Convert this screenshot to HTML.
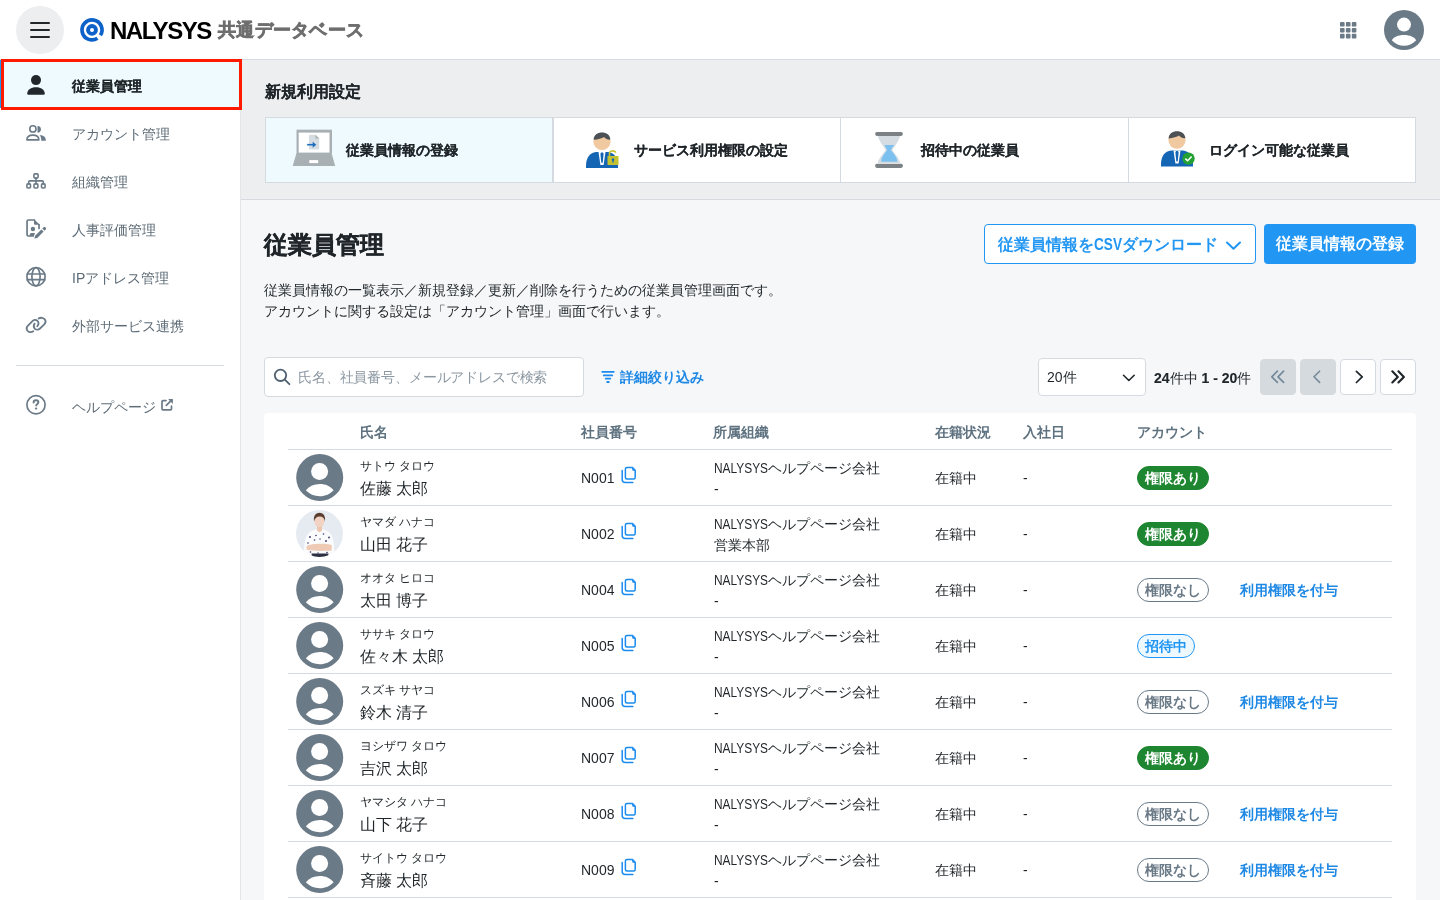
<!DOCTYPE html>
<html lang="ja">
<head>
<meta charset="utf-8">
<style>
*{box-sizing:border-box;margin:0;padding:0}
html,body{width:1440px;height:900px;overflow:hidden}
body{font-family:"Liberation Sans",sans-serif;color:#1f2529;background:#f6f7f9;position:relative;font-size:14px}
.abs{position:absolute}
.card,.nav.sel,#newset h2{-webkit-text-stroke:0.1px currentColor}
b{-webkit-text-stroke:0.15px currentColor}
#title{-webkit-text-stroke:0.4px currentColor}
/* header */
#hdr{position:absolute;left:0;top:0;width:1440px;height:60px;background:#fff;border-bottom:1px solid #d5dae0}
#burger{position:absolute;left:16px;top:6px;width:48px;height:48px;border-radius:50%;background:#eceef0}
#burger i{position:absolute;left:14px;width:20px;height:2px;background:#22272b;border-radius:1px}
#logo-t{position:absolute;left:110px;top:15.5px;font-size:24px;font-weight:bold;color:#000;letter-spacing:-1.5px;line-height:30px}
#logo-j{position:absolute;left:218px;top:16px;font-size:18.4px;font-weight:bold;color:#6e6e6e;line-height:28px;-webkit-text-stroke:0.7px #6e6e6e;letter-spacing:0.3px}
/* sidebar */
#side{position:absolute;left:0;top:60px;width:241px;height:840px;background:#fff;border-right:1px solid #e3e6e9}
.nav{position:absolute;left:0;width:240px;height:48px;color:#5e6c77;font-size:14px;line-height:48px}
.nav span{position:absolute;left:72px;top:2px}
.nav.sel{background:#eefafe;color:#1f2529;font-weight:bold}
#redbox{position:absolute;z-index:10;left:1px;top:59px;width:241px;height:51px;border:3px solid #ff1a00}
#divider{position:absolute;left:16px;top:305px;width:208px;height:1px;background:#d5dae0}
/* main */
#newset{position:absolute;left:241px;top:60px;width:1199px;height:140px;background:#edeef0;border-bottom:1px solid #d5dae0}
#newset h2{position:absolute;left:24px;top:20px;font-size:16px;font-weight:bold;line-height:24px}
.card{position:absolute;top:57px;height:66px;background:#fff;border:1px solid #d5dae0;font-weight:bold;font-size:14px}
.card.first{background:#eefafe}
.card span{position:absolute;left:80px;top:22px;line-height:20px}
.card svg{position:absolute;left:24px;top:8px}
#title{position:absolute;left:264px;top:228px;font-size:24px;font-weight:bold;line-height:34px}
#desc{position:absolute;left:264px;top:280px;font-size:14px;line-height:21px;color:#1f2529}
.btn{position:absolute;top:224px;height:40px;border-radius:4px;font-size:16px;font-weight:bold;line-height:38px}
#btn-csv{left:984px;width:272px;border:1px solid #2196f3;background:#fff;color:#2196f3;padding-left:13px;padding-top:1px}
#btn-reg{left:1264px;width:152px;background:#2196f3;color:#fff;text-align:center;line-height:40px}
#search{position:absolute;left:264px;top:357px;width:320px;height:40px;background:#fff;border:1px solid #d5dae0;border-radius:4px}
#search span{position:absolute;left:33px;top:0;line-height:38px;color:#8b97a1;font-size:14px;letter-spacing:-0.15px;white-space:nowrap}
#filter{position:absolute;left:600px;top:367px;color:#1e88e5;font-weight:bold;font-size:14px;line-height:20px}
#filter span{position:absolute;left:20px;top:0;white-space:nowrap}
#psel{position:absolute;left:1038px;top:358px;width:108px;height:38px;background:#fff;border:1px solid #d5dae0;border-radius:4px}
#psel span{position:absolute;left:8px;top:0;line-height:36px;font-size:14px}
#pinfo{position:absolute;left:1154px;top:368px;line-height:20px;font-size:14px;white-space:nowrap}
.pg{position:absolute;top:359px;width:36px;height:36px;border-radius:4px;background:#fff;border:1px solid #d5dae0}
.pg.dis{background:#d5dadf;border-color:#d5dadf}
.pg svg{position:absolute;left:0;top:0}
/* table */
#tcard{position:absolute;left:264px;top:413px;width:1152px;height:500px;background:#fff;border-radius:4px}
.th{position:absolute;top:7px;font-weight:bold;color:#5f7280;font-size:14px;line-height:24px;white-space:nowrap}
.hline{position:absolute;left:24px;width:1104px;height:1px;background:#d5dae0}
.row{position:absolute;left:24px;width:1104px;height:56px}
.av{position:absolute;left:8px;top:4px;width:48px;height:48px}
.kana{position:absolute;left:72px;top:7px;font-size:12px;line-height:18px;white-space:nowrap}
.nm{position:absolute;left:72px;top:27px;font-size:16px;line-height:24px;white-space:nowrap}
.eid{position:absolute;left:293px;top:18px;font-size:14px;line-height:20px}
.copy{position:absolute;left:328px;top:12px}
.org{position:absolute;left:426px;top:8px;font-size:14px;line-height:21px;white-space:nowrap}
.lat{display:inline-block;transform:scaleX(0.85);transform-origin:0 0;margin-right:-9.6px}
.lat2{display:inline-block;transform:scaleX(0.85);transform-origin:0 0;margin-right:-5px}
.st{position:absolute;left:647px;top:18px;font-size:14px;line-height:20px}
.dt{position:absolute;left:735px;top:18px;font-size:14px;line-height:20px}
.badge{position:absolute;left:849px;top:16px;height:24px;border-radius:12px;font-size:14px;font-weight:bold;line-height:22px;padding:0 7px;border:1px solid;white-space:nowrap}
.b-on{background:#1e8530;border-color:#1e8530;color:#fff}
.b-off{background:#fff;border-color:#6b7a87;color:#6b7a87}
.b-inv{background:#eef8ff;border-color:#2196f3;color:#2196f3}
.grant{position:absolute;left:952px;top:18px;font-size:14px;font-weight:bold;color:#1e88e5;line-height:20px;white-space:nowrap}
</style>
</head>
<body>
<div id="root" style="position:absolute;left:0;top:0;width:1440px;height:900px;overflow:hidden;will-change:transform">
<div id="hdr">
  <div id="burger"><i style="top:16px"></i><i style="top:23px"></i><i style="top:30px"></i></div>
  <svg class="abs" style="left:78px;top:16px" width="28" height="28" viewBox="0 0 28 28">
    <path d="M19.45 22.29 A10 10 0 1 1 22.39 19.35" fill="none" stroke="#0d62c9" stroke-width="3.7"/>
    <circle cx="14" cy="13.9" r="3.95" fill="none" stroke="#0d62c9" stroke-width="3.9"/>
  </svg>
  <div id="logo-t">NALYSYS</div>
  <div id="logo-j">共通データベース</div>
  <svg class="abs" style="left:1339.8px;top:21.7px" width="17" height="17" viewBox="0 0 17 17" fill="#6b7a87"><rect x="0" y="0" width="4.6" height="4.6" rx="0.9"/><rect x="5.9" y="0" width="4.6" height="4.6" rx="0.9"/><rect x="11.8" y="0" width="4.6" height="4.6" rx="0.9"/><rect x="0" y="5.9" width="4.6" height="4.6" rx="0.9"/><rect x="5.9" y="5.9" width="4.6" height="4.6" rx="0.9"/><rect x="11.8" y="5.9" width="4.6" height="4.6" rx="0.9"/><rect x="0" y="11.8" width="4.6" height="4.6" rx="0.9"/><rect x="5.9" y="11.8" width="4.6" height="4.6" rx="0.9"/><rect x="11.8" y="11.8" width="4.6" height="4.6" rx="0.9"/></svg>
  <svg class="abs" style="left:1384px;top:10px" width="40" height="40" viewBox="0 0 40 40">
    <circle cx="20" cy="20" r="20" fill="#6b7a87"/>
    <circle cx="20" cy="14.6" r="7" fill="#fff"/>
    <path d="M7.8 30.2 C9.5 27 14 24.9 20 24.9 C26 24.9 30.5 27 32.2 30.2 C28.5 33.9 24.5 35.8 20 35.8 C15.5 35.8 11.5 33.9 7.8 30.2Z" fill="#fff"/>
  </svg>
</div>

<div id="side">
<div class="nav sel" style="top:0px"><span>従業員管理</span></div>
<div class="nav" style="top:48px"><span>アカウント管理</span></div>
<div class="nav" style="top:96px"><span>組織管理</span></div>
<div class="nav" style="top:144px"><span>人事評価管理</span></div>
<div class="nav" style="top:192px"><span>IPアドレス管理</span></div>
<div class="nav" style="top:240px"><span>外部サービス連携</span></div>
<div id="divider"></div>
<div class="nav" style="top:321px"><span>ヘルプページ</span></div>

</div>
<svg style="position:absolute;z-index:5;left:27px;top:75px;" width="18" height="20" viewBox="0 0 18 20"><circle cx="9" cy="5.1" r="5" fill="#22272b"/><path d="M0.2 18.6 C0.4 14.6 4 12.3 9 12.3 C14 12.3 17.6 14.6 17.8 18.6 C17.8 19.4 17.4 19.8 16.6 19.8 L1.4 19.8 C0.6 19.8 0.2 19.4 0.2 18.6Z" fill="#22272b"/></svg><svg style="position:absolute;z-index:5;left:22px;top:120px;" width="28" height="26" viewBox="0 0 28 26"><g fill="none" stroke="#6b7a87" stroke-linecap="round" stroke-linejoin="round" stroke-width="1.6"><circle cx="10.9" cy="8.9" r="3.1"/><path d="M4.9 19.9 C4.9 16.6 7.5 15.1 10.9 15.1 C14.3 15.1 16.9 16.6 16.9 19.9 Z"/></g><path d="M15.5 5.9 A3.4 3.4 0 0 1 15.5 12.7Z" fill="#6b7a87"/><path d="M17.6 14.9 C21.5 15 23.9 17 23.9 20.7 H19.3 C19.3 18 18.7 16.3 17.6 14.9Z" fill="#6b7a87"/></svg><svg style="position:absolute;z-index:5;left:22px;top:168px;" width="28" height="26" viewBox="0 0 28 26"><g fill="none" stroke="#6b7a87" stroke-linecap="round" stroke-linejoin="round" stroke-width="1.6"><rect x="11.9" y="5.9" width="4.2" height="4.2" rx="1"/><rect x="4.9" y="15.9" width="3.6" height="4.1" rx="1"/><rect x="12" y="15.9" width="3.9" height="4.1" rx="1"/><rect x="19.5" y="15.9" width="3.6" height="4.1" rx="1"/><path d="M14 10.1 V15.9 M6.7 15.9 V14 Q6.7 12.9 7.8 12.9 H20.2 Q21.3 12.9 21.3 14 V15.9"/></g></svg><svg style="position:absolute;z-index:5;left:22px;top:216px;" width="28" height="26" viewBox="0 0 28 26"><g fill="none" stroke="#6b7a87" stroke-linecap="round" stroke-linejoin="round" stroke-width="1.7"><path d="M12.5 4 H6.2 Q5.05 4 5.05 5.2 V18.8 Q5.05 20 6.2 20 H7"/><path d="M17 8.5 V12.5"/></g><path d="M12 3.2 L17.9 8.7 H13 Q12 8.7 12 7.7Z" fill="#6b7a87"/><circle cx="10.9" cy="13" r="2.2" fill="#6b7a87"/><path d="M6.8 20.8 L8.2 17.6 Q8.6 16.9 9.5 16.9 H12.9 L11.8 20.8Z" fill="#6b7a87"/><path d="M12.4 22.5 L13.1 19.7 L19.4 13.4 L21.6 15.6 L15.3 21.9 Z" fill="#6b7a87"/><path d="M20.3 12.5 L21.6 11.2 Q22.5 10.4 23.3 11.2 L23.8 11.7 Q24.6 12.5 23.8 13.4 L22.5 14.7Z" fill="#6b7a87"/></svg><svg style="position:absolute;z-index:5;left:22px;top:264px;" width="28" height="26" viewBox="0 0 28 26"><g fill="none" stroke="#6b7a87" stroke-linecap="round" stroke-linejoin="round" stroke-width="1.7"><circle cx="14" cy="12.8" r="9.1"/><ellipse cx="14" cy="12.8" rx="4.1" ry="9.1"/><path d="M5.2 10 H22.8 M5.2 15.7 H22.8"/></g></svg><svg style="position:absolute;z-index:5;left:22px;top:312px;" width="28" height="26" viewBox="0 0 28 26"><g fill="none" stroke="#6b7a87" stroke-linecap="round" stroke-linejoin="round" stroke-width="1.8"><path d="M11.3 19.2 C9 20.8 6 20.3 5 18 C4.2 16.4 4.8 14.8 6 13.7 L10.2 9.3 C11.7 7.8 14 7.5 15.4 8.8 C16.8 10.1 16.6 12.5 15.3 14.2"/><path d="M16.6 6.6 C18.6 5.2 21.6 5.6 22.9 7.5 C24 9.1 23.6 11 22.3 12.4 L18 16.5 C16.5 17.9 14.2 18 12.9 16.8 C11.5 15.5 11.6 13.2 12.6 11.6"/></g></svg><svg style="position:absolute;z-index:5;left:22px;top:392px;" width="28" height="26" viewBox="0 0 28 26"><g fill="none" stroke="#6b7a87" stroke-linecap="round" stroke-linejoin="round" stroke-width="1.7"><circle cx="14" cy="12.8" r="9.1"/><path d="M11.6 10.6 C11.6 9 12.6 8.3 14 8.3 C15.4 8.3 16.4 9.1 16.4 10.3 C16.4 11.8 14.2 12 14.2 13.5" stroke-width="1.9"/></g><circle cx="14.1" cy="16.6" r="1.15" fill="#6b7a87"/></svg><svg style="position:absolute;z-index:5;left:154px;top:394px;" width="26" height="22" viewBox="0 0 26 22"><g fill="none" stroke="#6b7a87" stroke-linecap="round" stroke-linejoin="round" stroke-width="1.7"><path d="M12 6.6 H9 Q8 6.6 8 7.6 V14.8 Q8 15.8 9 15.8 H16.5 Q17.5 15.8 17.5 14.8 V12.2"/><path d="M12.3 11.4 L16.6 7.1"/></g><path d="M14.1 5 H18.9 V9.9Z" fill="#6b7a87"/></svg><svg style="position:absolute;z-index:5;left:270px;top:364px;" width="26" height="26" viewBox="0 0 26 26"><g fill="none" stroke-linecap="round" stroke-linejoin="round" stroke="#4f6070" stroke-width="1.8"><circle cx="10.5" cy="11.3" r="5.7"/><path d="M14.8 15.6 L19.4 20.2"/></g></svg><svg style="position:absolute;z-index:5;left:596px;top:364px;" width="24" height="24" viewBox="0 0 24 24"><g fill="none" stroke-linecap="round" stroke-linejoin="round" stroke="#1a8cef" stroke-width="1.8"><path d="M6.2 7.85 H17.8 M7.8 11.4 H16.2 M9.7 14.6 H14.3 M11.2 18 H12.8"/></g></svg><svg style="position:absolute;z-index:5;left:1118px;top:366px;" width="22" height="22" viewBox="0 0 22 22"><path d="M5.5 9.3 L10.85 14.5 L16.2 9.3" fill="none" stroke-linecap="round" stroke-linejoin="round" stroke="#1f2529" stroke-width="1.6"/></svg><svg style="position:absolute;z-index:5;left:1220px;top:234px;" width="26" height="22" viewBox="0 0 26 22"><path d="M7 8.5 L13.5 14.8 L20 8.5" fill="none" stroke-linecap="round" stroke-linejoin="round" stroke="#2196f3" stroke-width="2"/></svg><svg style="position:absolute;z-index:5;left:1260px;top:359px;" width="36" height="36" viewBox="0 0 36 36"><path d="M17.4 12.2 L11.8 17.8 L17.4 23.4 M23.6 12.2 L18 17.8 L23.6 23.4" fill="none" stroke-linecap="round" stroke-linejoin="round" stroke="#74899a" stroke-width="1.7"/></svg><svg style="position:absolute;z-index:5;left:1300px;top:359px;" width="36" height="36" viewBox="0 0 36 36"><path d="M19.6 12.2 L14 17.8 L19.6 23.4" fill="none" stroke-linecap="round" stroke-linejoin="round" stroke="#74899a" stroke-width="1.6"/></svg><svg style="position:absolute;z-index:5;left:1340px;top:359px;" width="36" height="36" viewBox="0 0 36 36"><path d="M16.4 12.3 L22.2 17.9 L16.4 23.5" fill="none" stroke-linecap="round" stroke-linejoin="round" stroke="#1f2529" stroke-width="1.7"/></svg><svg style="position:absolute;z-index:5;left:1380px;top:359px;" width="36" height="36" viewBox="0 0 36 36"><path d="M12.3 12.3 L17.8 17.9 L12.3 23.5 M18.4 12.3 L23.9 17.9 L18.4 23.5" fill="none" stroke-linecap="round" stroke-linejoin="round" stroke="#1f2529" stroke-width="2.1"/></svg>
<div style="position:absolute;left:0;top:60px;width:2px;height:48px;background:#2196f3;z-index:9"></div>
<div id="redbox"></div>
<div id="newset">
  <h2>新規利用設定</h2>
<div class="card first" style="left:24px;width:288px"><svg width="48" height="48" viewBox="0 0 48 48"><g transform="translate(-0.5,-2.3)">
<rect x="7" y="6" width="35.5" height="23.5" fill="#a9b0b4"/>
<rect x="9.2" y="8.9" width="30.8" height="20" fill="#fff"/>
<path d="M7 29.4 H42 L45.7 42.2 H3.2Z" fill="#a9b0b4"/>
<rect x="19.8" y="36.4" width="8.9" height="3" fill="#fff"/>
<path d="M20.4 11.1 H26 L29.7 14.8 V24.8 Q29.7 25.8 28.7 25.8 H20.4 Q19.4 25.8 19.4 24.8 V12.1 Q19.4 11.1 20.4 11.1Z" fill="#d5dde3"/>
<path d="M26 11.1 L29.7 14.8 H26Z" fill="#a9b0b4"/>
<path d="M17.6 21 H24.5" stroke="#1d6fbd" stroke-width="1.6"/><path d="M23.2 18 L26.8 21 L23.2 24Z" fill="#1d6fbd"/>
</g></svg><span>従業員情報の登録</span></div>
<div class="card" style="left:312px;width:288px"><svg width="48" height="48" viewBox="0 0 48 48"><g transform="translate(0,0)">
<path d="M8 40 C8 31 12 27 18 26 H30 C36 27 40 31 40 40 V42 H8Z" fill="#1565b5"/>
<path d="M20.5 26 H27.5 L25.6 39 H22.4Z" fill="#fff"/>
<path d="M23 26.5 H25 L25.6 28 L24.8 36 L24 37.5 L23.2 36 L22.4 28Z" fill="#1565b5"/>
<circle cx="24" cy="15.5" r="8.6" fill="#f1c9a0"/>
<path d="M15.6 13.8 C16 9 19.5 6.6 24 6.6 C28.5 6.6 32 9 32.4 13.6 C30 14 28 13 26 11 C24 12.5 20 13.5 15.6 13.8Z" fill="#4b5154"/>
<path d="M31.5 31 V27.5 C31.5 24.5 36.5 24 37.8 26.7" fill="none" stroke="#c5c232" stroke-width="1.6"/><rect x="29.5" y="30" width="11" height="9" fill="#c5c232"/><circle cx="35" cy="33.5" r="1.2" fill="#1565b5"/><rect x="34.4" y="33.5" width="1.2" height="3.2" fill="#1565b5"/></g></svg><span>サービス利用権限の設定</span></div>
<div class="card" style="left:599px;width:289px"><svg width="48" height="48" viewBox="0 0 48 48"><g transform="translate(-1,-2)">
<path d="M13.9 11.9 H36.1 C35 17 30.5 22 28.4 26 C30.5 30 35.5 34 36.1 38.9 H13.9 C14.5 34 19.5 30 21.6 26 C19.5 22 15 17 13.9 11.9Z" fill="#d5dde3"/>
<path d="M20.6 21.1 H30.3 C29 23 27.8 24.5 26.9 26 C29 29 33.3 33 33.3 37.8 H17.2 C17.2 33 21 29 23.1 26 C22.2 24.5 21 23 20.6 21.1Z" fill="#7cc0f0"/>
<rect x="11.1" y="8.1" width="27.8" height="3.8" rx="1.8" fill="#7b8185"/>
<rect x="11.1" y="39.7" width="27.8" height="4.2" rx="1.8" fill="#7b8185"/>
</g></svg><span>招待中の従業員</span></div>
<div class="card" style="left:887px;width:288px"><svg width="48" height="48" viewBox="0 0 48 48"><g transform="translate(0,-1.4)">
<path d="M8 40 C8 31 12 27 18 26 H30 C36 27 40 31 40 40 V42 H8Z" fill="#1565b5"/>
<path d="M20.5 26 H27.5 L25.6 39 H22.4Z" fill="#fff"/>
<path d="M23 26.5 H25 L25.6 28 L24.8 36 L24 37.5 L23.2 36 L22.4 28Z" fill="#1565b5"/>
<circle cx="24" cy="15.5" r="8.6" fill="#f1c9a0"/>
<path d="M15.6 13.8 C16 9 19.5 6.6 24 6.6 C28.5 6.6 32 9 32.4 13.6 C30 14 28 13 26 11 C24 12.5 20 13.5 15.6 13.8Z" fill="#4b5154"/>
<circle cx="35.5" cy="34" r="6.2" fill="#22a033"/><path d="M32.3 34 L34.6 36.2 L38.6 31.8" fill="none" stroke="#fff" stroke-width="1.5"/></g></svg><span>ログイン可能な従業員</span></div>

</div>
<div id="title">従業員管理</div>
<div id="desc">従業員情報の一覧表示／新規登録／更新／削除を行うための従業員管理画面です。<br>アカウントに関する設定は「アカウント管理」画面で行います。</div>
<div class="btn" id="btn-csv">従業員情報を<span class="lat2">CSV</span>ダウンロード</div>
<div class="btn" id="btn-reg">従業員情報の登録</div>
<div id="search"><span>氏名、社員番号、メールアドレスで検索</span></div>
<div id="filter"><span>詳細絞り込み</span></div>
<div id="psel"><span>20件</span></div>
<div id="pinfo"><b>24</b>件中 <b>1 - 20</b>件</div>
<div class="pg dis" style="left:1260px"></div>
<div class="pg dis" style="left:1300px"></div>
<div class="pg" style="left:1340px"></div>
<div class="pg" style="left:1380px"></div>
<div id="tcard">
<div class="th" style="left:96px">氏名</div>
<div class="th" style="left:317px">社員番号</div>
<div class="th" style="left:449px">所属組織</div>
<div class="th" style="left:671px">在籍状況</div>
<div class="th" style="left:759px">入社日</div>
<div class="th" style="left:873px">アカウント</div>
<div class="hline" style="top:36px"></div>
<div class="row" style="top:37px"><svg class="av" viewBox="0 0 48 48"><circle cx="23.7" cy="23.5" r="23.5" fill="#6b7a87"/><circle cx="23.6" cy="17.5" r="8.5" fill="#fff"/><path d="M9.8 36.2 C13.5 32 18 30 23.8 30 C29.6 30 34 32 37.6 36.2 C34 40 29.6 42.2 23.8 42.2 C18 42.2 13.5 40 9.8 36.2Z" fill="#fff"/></svg><div class="kana">サトウ タロウ</div><div class="nm">佐藤 太郎</div><div class="eid">N001</div><svg class="copy" width="26" height="26" viewBox="0 0 26 26" fill="none" stroke="#1a8cef" stroke-width="1.5" stroke-linecap="round" stroke-linejoin="round"><path d="M10.9 5.5 H16.5 L19.2 8.2 V15.6 Q19.2 17.1 17.7 17.1 H10.9 Q9.4 17.1 9.4 15.6 V7 Q9.4 5.5 10.9 5.5Z"/><path d="M16.2 5.2 L19.9 8.7 H17.2 Q16.2 8.7 16.2 7.7Z" fill="#1a8cef" stroke="none"/><path d="M6.2 8.6 V17.4 Q6.2 20.4 9.2 20.4 H16.8"/></svg><div class="org"><span class="lat">NALYSYS</span>ヘルプページ会社<br>-</div><div class="st">在籍中</div><div class="dt">-</div><div class="badge b-on">権限あり</div></div>
<div class="hline" style="top:92px"></div>
<div class="row" style="top:93px"><svg class="av" viewBox="0 0 48 48"><defs><clipPath id="pc"><circle cx="23.5" cy="23.5" r="23.5"/></clipPath></defs><circle cx="23.5" cy="23.5" r="23.5" fill="#e6ebf1"/>
<g clip-path="url(#pc)">
<path d="M8 47 C8 34 9 25 14 22 L19 19.6 H28 L33 22 C37 25 38.5 34 38.5 47Z" fill="#fafbfd"/>
<path d="M21 15 H26 V20.5 L23.5 22.5 L21 20.5Z" fill="#eec6b0"/>
<ellipse cx="23.4" cy="11.6" rx="4.9" ry="5.7" fill="#f2d2c2"/>
<path d="M18 11.5 C17.3 5.5 20 2.8 23.5 2.8 C27 2.8 29.7 5.5 29 11.5 C28.3 8.2 26.3 6.4 23.5 6.6 C21 6.6 18.8 8.2 18 11.5Z" fill="#5b3d2e"/>
<path d="M10.5 36 C15 33.2 30 33 35.8 35 L35.6 40.5 C30 41 16 41.2 10.6 39.8Z" fill="#efcab4"/>
<path d="M15.5 43.5 H32.5 L32 47 H16Z" fill="#2b3140"/>
<g fill="#3d3566"><circle cx="14" cy="27" r="0.9"/><circle cx="20" cy="25.5" r="0.8"/><circle cx="27.5" cy="24" r="0.8"/><circle cx="33" cy="27.5" r="0.9"/><circle cx="18.5" cy="30" r="0.8"/><circle cx="30" cy="31" r="0.9"/><circle cx="12" cy="33" r="0.8"/><circle cx="24" cy="29" r="0.7"/><circle cx="14.5" cy="42" r="0.8"/><circle cx="31" cy="42.5" r="0.8"/><circle cx="22" cy="43" r="0.7"/></g>
</g></svg><div class="kana">ヤマダ ハナコ</div><div class="nm">山田 花子</div><div class="eid">N002</div><svg class="copy" width="26" height="26" viewBox="0 0 26 26" fill="none" stroke="#1a8cef" stroke-width="1.5" stroke-linecap="round" stroke-linejoin="round"><path d="M10.9 5.5 H16.5 L19.2 8.2 V15.6 Q19.2 17.1 17.7 17.1 H10.9 Q9.4 17.1 9.4 15.6 V7 Q9.4 5.5 10.9 5.5Z"/><path d="M16.2 5.2 L19.9 8.7 H17.2 Q16.2 8.7 16.2 7.7Z" fill="#1a8cef" stroke="none"/><path d="M6.2 8.6 V17.4 Q6.2 20.4 9.2 20.4 H16.8"/></svg><div class="org"><span class="lat">NALYSYS</span>ヘルプページ会社<br>営業本部</div><div class="st">在籍中</div><div class="dt">-</div><div class="badge b-on">権限あり</div></div>
<div class="hline" style="top:148px"></div>
<div class="row" style="top:149px"><svg class="av" viewBox="0 0 48 48"><circle cx="23.7" cy="23.5" r="23.5" fill="#6b7a87"/><circle cx="23.6" cy="17.5" r="8.5" fill="#fff"/><path d="M9.8 36.2 C13.5 32 18 30 23.8 30 C29.6 30 34 32 37.6 36.2 C34 40 29.6 42.2 23.8 42.2 C18 42.2 13.5 40 9.8 36.2Z" fill="#fff"/></svg><div class="kana">オオタ ヒロコ</div><div class="nm">太田 博子</div><div class="eid">N004</div><svg class="copy" width="26" height="26" viewBox="0 0 26 26" fill="none" stroke="#1a8cef" stroke-width="1.5" stroke-linecap="round" stroke-linejoin="round"><path d="M10.9 5.5 H16.5 L19.2 8.2 V15.6 Q19.2 17.1 17.7 17.1 H10.9 Q9.4 17.1 9.4 15.6 V7 Q9.4 5.5 10.9 5.5Z"/><path d="M16.2 5.2 L19.9 8.7 H17.2 Q16.2 8.7 16.2 7.7Z" fill="#1a8cef" stroke="none"/><path d="M6.2 8.6 V17.4 Q6.2 20.4 9.2 20.4 H16.8"/></svg><div class="org"><span class="lat">NALYSYS</span>ヘルプページ会社<br>-</div><div class="st">在籍中</div><div class="dt">-</div><div class="badge b-off">権限なし</div><div class="grant">利用権限を付与</div></div>
<div class="hline" style="top:204px"></div>
<div class="row" style="top:205px"><svg class="av" viewBox="0 0 48 48"><circle cx="23.7" cy="23.5" r="23.5" fill="#6b7a87"/><circle cx="23.6" cy="17.5" r="8.5" fill="#fff"/><path d="M9.8 36.2 C13.5 32 18 30 23.8 30 C29.6 30 34 32 37.6 36.2 C34 40 29.6 42.2 23.8 42.2 C18 42.2 13.5 40 9.8 36.2Z" fill="#fff"/></svg><div class="kana">ササキ タロウ</div><div class="nm">佐々木 太郎</div><div class="eid">N005</div><svg class="copy" width="26" height="26" viewBox="0 0 26 26" fill="none" stroke="#1a8cef" stroke-width="1.5" stroke-linecap="round" stroke-linejoin="round"><path d="M10.9 5.5 H16.5 L19.2 8.2 V15.6 Q19.2 17.1 17.7 17.1 H10.9 Q9.4 17.1 9.4 15.6 V7 Q9.4 5.5 10.9 5.5Z"/><path d="M16.2 5.2 L19.9 8.7 H17.2 Q16.2 8.7 16.2 7.7Z" fill="#1a8cef" stroke="none"/><path d="M6.2 8.6 V17.4 Q6.2 20.4 9.2 20.4 H16.8"/></svg><div class="org"><span class="lat">NALYSYS</span>ヘルプページ会社<br>-</div><div class="st">在籍中</div><div class="dt">-</div><div class="badge b-inv">招待中</div></div>
<div class="hline" style="top:260px"></div>
<div class="row" style="top:261px"><svg class="av" viewBox="0 0 48 48"><circle cx="23.7" cy="23.5" r="23.5" fill="#6b7a87"/><circle cx="23.6" cy="17.5" r="8.5" fill="#fff"/><path d="M9.8 36.2 C13.5 32 18 30 23.8 30 C29.6 30 34 32 37.6 36.2 C34 40 29.6 42.2 23.8 42.2 C18 42.2 13.5 40 9.8 36.2Z" fill="#fff"/></svg><div class="kana">スズキ サヤコ</div><div class="nm">鈴木 清子</div><div class="eid">N006</div><svg class="copy" width="26" height="26" viewBox="0 0 26 26" fill="none" stroke="#1a8cef" stroke-width="1.5" stroke-linecap="round" stroke-linejoin="round"><path d="M10.9 5.5 H16.5 L19.2 8.2 V15.6 Q19.2 17.1 17.7 17.1 H10.9 Q9.4 17.1 9.4 15.6 V7 Q9.4 5.5 10.9 5.5Z"/><path d="M16.2 5.2 L19.9 8.7 H17.2 Q16.2 8.7 16.2 7.7Z" fill="#1a8cef" stroke="none"/><path d="M6.2 8.6 V17.4 Q6.2 20.4 9.2 20.4 H16.8"/></svg><div class="org"><span class="lat">NALYSYS</span>ヘルプページ会社<br>-</div><div class="st">在籍中</div><div class="dt">-</div><div class="badge b-off">権限なし</div><div class="grant">利用権限を付与</div></div>
<div class="hline" style="top:316px"></div>
<div class="row" style="top:317px"><svg class="av" viewBox="0 0 48 48"><circle cx="23.7" cy="23.5" r="23.5" fill="#6b7a87"/><circle cx="23.6" cy="17.5" r="8.5" fill="#fff"/><path d="M9.8 36.2 C13.5 32 18 30 23.8 30 C29.6 30 34 32 37.6 36.2 C34 40 29.6 42.2 23.8 42.2 C18 42.2 13.5 40 9.8 36.2Z" fill="#fff"/></svg><div class="kana">ヨシザワ タロウ</div><div class="nm">吉沢 太郎</div><div class="eid">N007</div><svg class="copy" width="26" height="26" viewBox="0 0 26 26" fill="none" stroke="#1a8cef" stroke-width="1.5" stroke-linecap="round" stroke-linejoin="round"><path d="M10.9 5.5 H16.5 L19.2 8.2 V15.6 Q19.2 17.1 17.7 17.1 H10.9 Q9.4 17.1 9.4 15.6 V7 Q9.4 5.5 10.9 5.5Z"/><path d="M16.2 5.2 L19.9 8.7 H17.2 Q16.2 8.7 16.2 7.7Z" fill="#1a8cef" stroke="none"/><path d="M6.2 8.6 V17.4 Q6.2 20.4 9.2 20.4 H16.8"/></svg><div class="org"><span class="lat">NALYSYS</span>ヘルプページ会社<br>-</div><div class="st">在籍中</div><div class="dt">-</div><div class="badge b-on">権限あり</div></div>
<div class="hline" style="top:372px"></div>
<div class="row" style="top:373px"><svg class="av" viewBox="0 0 48 48"><circle cx="23.7" cy="23.5" r="23.5" fill="#6b7a87"/><circle cx="23.6" cy="17.5" r="8.5" fill="#fff"/><path d="M9.8 36.2 C13.5 32 18 30 23.8 30 C29.6 30 34 32 37.6 36.2 C34 40 29.6 42.2 23.8 42.2 C18 42.2 13.5 40 9.8 36.2Z" fill="#fff"/></svg><div class="kana">ヤマシタ ハナコ</div><div class="nm">山下 花子</div><div class="eid">N008</div><svg class="copy" width="26" height="26" viewBox="0 0 26 26" fill="none" stroke="#1a8cef" stroke-width="1.5" stroke-linecap="round" stroke-linejoin="round"><path d="M10.9 5.5 H16.5 L19.2 8.2 V15.6 Q19.2 17.1 17.7 17.1 H10.9 Q9.4 17.1 9.4 15.6 V7 Q9.4 5.5 10.9 5.5Z"/><path d="M16.2 5.2 L19.9 8.7 H17.2 Q16.2 8.7 16.2 7.7Z" fill="#1a8cef" stroke="none"/><path d="M6.2 8.6 V17.4 Q6.2 20.4 9.2 20.4 H16.8"/></svg><div class="org"><span class="lat">NALYSYS</span>ヘルプページ会社<br>-</div><div class="st">在籍中</div><div class="dt">-</div><div class="badge b-off">権限なし</div><div class="grant">利用権限を付与</div></div>
<div class="hline" style="top:428px"></div>
<div class="row" style="top:429px"><svg class="av" viewBox="0 0 48 48"><circle cx="23.7" cy="23.5" r="23.5" fill="#6b7a87"/><circle cx="23.6" cy="17.5" r="8.5" fill="#fff"/><path d="M9.8 36.2 C13.5 32 18 30 23.8 30 C29.6 30 34 32 37.6 36.2 C34 40 29.6 42.2 23.8 42.2 C18 42.2 13.5 40 9.8 36.2Z" fill="#fff"/></svg><div class="kana">サイトウ タロウ</div><div class="nm">斉藤 太郎</div><div class="eid">N009</div><svg class="copy" width="26" height="26" viewBox="0 0 26 26" fill="none" stroke="#1a8cef" stroke-width="1.5" stroke-linecap="round" stroke-linejoin="round"><path d="M10.9 5.5 H16.5 L19.2 8.2 V15.6 Q19.2 17.1 17.7 17.1 H10.9 Q9.4 17.1 9.4 15.6 V7 Q9.4 5.5 10.9 5.5Z"/><path d="M16.2 5.2 L19.9 8.7 H17.2 Q16.2 8.7 16.2 7.7Z" fill="#1a8cef" stroke="none"/><path d="M6.2 8.6 V17.4 Q6.2 20.4 9.2 20.4 H16.8"/></svg><div class="org"><span class="lat">NALYSYS</span>ヘルプページ会社<br>-</div><div class="st">在籍中</div><div class="dt">-</div><div class="badge b-off">権限なし</div><div class="grant">利用権限を付与</div></div>
<div class="hline" style="top:484px"></div>

</div>
</div>
</body>
</html>
